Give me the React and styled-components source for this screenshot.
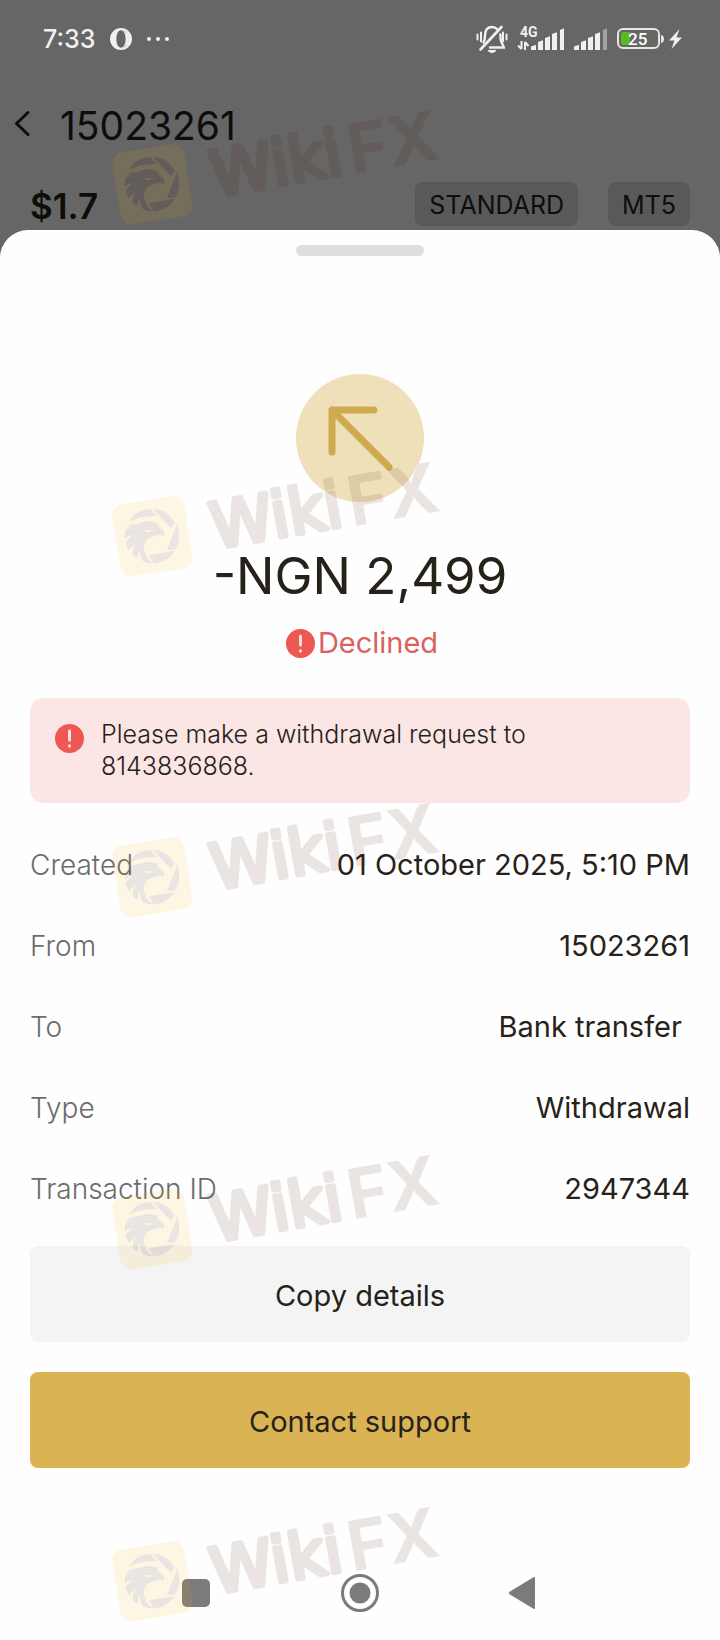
import React from "react";
import styled, { createGlobalStyle } from "styled-components";

const GlobalStyle = createGlobalStyle`
  * {
    box-sizing: border-box;
  }
  body {
    margin: 0;
    background-color: #666666;
    font-family: Inter, "Liberation Sans", sans-serif;
    color: #272219;
  }
  button {
    border: none;
    padding: 0;
    background: none;
    color: inherit;
    font-family: inherit;
    cursor: pointer;
  }
`;

const Page = styled.div`
  position: relative;
  display: flex;
  flex-direction: column;
  min-height: 100vh;
  overflow: hidden;
`;
const StatusBar = styled.div`
  display: flex;
  align-items: center;
  justify-content: space-between;
  height: 78px;
  padding: 0 38px 0 43px;
  color: #f0f0f0;
`;
const StatusGroup = styled.div`
  display: flex;
  align-items: center;
  gap: ${props => props.$gap}px;
`;
const Clock = styled.span`
  font-size: 25px;
  font-weight: 500;
`;
const Header = styled.header`
  display: flex;
  align-items: center;
  gap: 28px;
  height: 92px;
  padding-left: 12px;
  color: #0f0d0a;
`;
const BackButton = styled.button`
  display: flex;
`;
const AccountNumber = styled.h1`
  margin: 0;
  padding-top: 2px;
  font-size: 39px;
  font-weight: 400;
`;
const AccountRow = styled.div`
  display: flex;
  align-items: center;
  justify-content: space-between;
  height: 68px;
  padding: 0 30px;
  color: #0f0d0a;
`;
const Balance = styled.span`
  padding-top: 4px;
  font-size: 35px;
  font-weight: 600;
`;
const Badges = styled.div`
  display: flex;
  gap: 30px;
`;
const Badge = styled.span`
  padding: 2px 14px 0;
  border-radius: 8px;
  background-color: #595959;
  font-size: 25px;
  line-height: 42px;
`;
const Sheet = styled.main`
  display: flex;
  flex: 1;
  flex-direction: column;
  margin-top: -8px;
  padding: 15px 30px 0;
  border-radius: 28px 28px 0 0;
  background-color: #fefefe;
`;
const Handle = styled.div`
  align-self: center;
  width: 128px;
  height: 11px;
  border-radius: 6px;
  background-color: #dedede;
`;
const Summary = styled.section`
  display: flex;
  flex-direction: column;
  align-items: center;
  margin-top: 118px;
`;
const Amount = styled.h2`
  margin: 42px 0 0;
  font-size: 51px;
  font-weight: 400;
  line-height: 64px;
`;
const Status = styled.div`
  display: flex;
  align-items: center;
  gap: 3px;
  margin-top: 14px;
  padding: 2px 0 0 4px;
  color: #d8635f;
  font-size: 29px;
  line-height: 38px;
`;
const Alert = styled.div`
  display: flex;
  gap: 17px;
  margin-top: 36px;
  padding: 20px 25px 21px;
  border-radius: 14px;
  background-color: #fbe6e5;
  font-size: 25px;
  font-weight: 300;
  line-height: 32px;
  svg {
    flex: none;
    margin-top: 6px;
  }
`;
const AlertText = styled.p`
  margin: 0;
  max-width: 440px;
`;
const Details = styled.dl`
  margin: 21px 0 17px;
`;
const DetailRow = styled.div`
  display: flex;
  align-items: center;
  justify-content: space-between;
  height: 81px;
`;
const DetailLabel = styled.dt`
  color: #6c6c6c;
  font-size: 28px;
  font-weight: 300;
`;
const DetailValue = styled.dd`
  margin: 0;
  font-size: 29px;
  white-space: pre;
`;
const Actions = styled.div`
  display: flex;
  flex-direction: column;
  gap: 30px;
`;
const ActionButton = styled.button`
  height: 96px;
  padding-top: 3px;
  border-radius: 8px;
  background-color: ${props => (props.$primary ? "#d9b354" : "#f4f4f4")};
  font-size: 29px;
`;
const NavBar = styled.nav`
  display: flex;
  align-items: center;
  justify-content: center;
  gap: 126px;
  height: 94px;
  margin-top: auto;
`;
const NavButton = styled.button`
  display: flex;
  justify-content: center;
  width: 38px;
`;
const Mark = styled.svg`
  position: absolute;
  left: 100px;
  top: ${props => props.$top}px;
  opacity: 0.1;
  pointer-events: none;
`;

const OperaIcon = () => (
  <svg width="22" height="22" viewBox="0 0 22 22">
    <path
      fill="#f0f0f0"
      fillRule="evenodd"
      d="M11 0a11 11 0 1 0 0 22a11 11 0 1 0 0-22zM11 2.200c3 0 4.600 4 4.600 8.800s-1.600 8.800-4.600 8.800s-4.600-4-4.600-8.800s1.600-8.800 4.600-8.800z"
    />
    <path fill="#d8d8d8" d="M11.500 2c2.500-.6 4.500.6 6 2.800L15 6.500c-.7-2.500-2-4-3.500-4.500zM11.500 20c2.500.6 4.500-.6 6-2.800L15 15.500c-.7 2.500-2 4-3.500 4.500z" />
  </svg>
);

const DotsIcon = () => (
  <svg width="22" height="6" viewBox="0 0 22 6" fill="#f0f0f0">
    <circle cx="2" cy="3" r="2" />
    <circle cx="11" cy="3" r="2" />
    <circle cx="20" cy="3" r="2" />
  </svg>
);

const MutedIcon = () => (
  <svg width="32" height="28" viewBox="0 0 32 28" fill="none" stroke="#f0f0f0" strokeLinecap="round">
    <path strokeWidth="2" d="M1.500 9.500v5M5 7.500v9M27 7.500v9M30.500 9.500v5" />
    <path strokeWidth="2.400" d="M7.500 17.500c1.200-1.700 1.500-3.500 1.500-7C9 5 11.500 2 16 2c2.300 0 4 .8 5.200 2.200M24.300 9.500c0 4.500.5 6.500 1.500 8.500c.7 1.300 1.400 2 2 4.500H14" />
    <path strokeWidth="2.600" d="M4.500 24.500L25.500 2" />
    <path fill="#f0f0f0" stroke="none" d="M11.500 25h9c-1 2-2.500 3-4.500 3s-3.500-1-4.500-3z" />
  </svg>
);

const SignalBars = ({ x, weak }) => (
  <g fill="#f0f0f0">
    <path d={`M${x} 23v-3.500l5-1.800V23z`} />
    <path d={`M${x + 7} 23v-8l5-1.800V23z`} />
    <path d={`M${x + 14} 23V11l5-1.800V23z`} />
    <path d={`M${x + 21} 23V7l5-1.800V23z`} />
    <path fill={weak ? "#a2a2a2" : "#f0f0f0"} d={`M${x + 29} 23V3l4-1.800V23z`} />
  </g>
);

const NetworkIcon = () => (
  <svg width="48" height="32" viewBox="0 -4 48 32">
    <text x="3" y="10" fill="#f0f0f0" fontFamily="Roboto" fontSize="14" fontWeight="700">
      4G
    </text>
    <path
      fill="none"
      stroke="#f0f0f0"
      strokeWidth="2"
      d="M4.500 14v8M1 18.500l3.500 3.500M8 23v-8M8 15l3.500 4"
    />
    <SignalBars x={14} />
  </svg>
);

const SignalIcon = () => (
  <svg width="34" height="24" viewBox="0 0 34 24">
    <SignalBars x={0} weak />
  </svg>
);

const BatteryIcon = () => (
  <svg width="47" height="22" viewBox="0 0 47 22">
    <rect x="1" y="1" width="41" height="19" rx="5" fill="none" stroke="#e6e6e6" strokeWidth="2" />
    <path fill="#59b91e" d="M6 4h7v13H6a2 2 0 0 1-2-2V6a2 2 0 0 1 2-2z" />
    <path fill="#e6e6e6" d="M44 7c2 .5 3 1.500 3 4s-1 3.500-3 4z" />
    <text x="11" y="17" fill="#ffffff" fontFamily="Roboto" fontSize="17" fontWeight="500">
      25
    </text>
  </svg>
);

const BoltIcon = () => (
  <svg width="13" height="20" viewBox="0 0 13 20">
    <path fill="#f0f0f0" d="M10.500 0L0 11.500h5.500L2.500 20L13 8.500H7.500z" />
  </svg>
);

const BackIcon = () => (
  <svg width="20" height="28" viewBox="0 0 20 28" fill="none" stroke="#0f0d0a">
    <path strokeWidth="3" strokeLinecap="round" strokeLinejoin="round" d="M16 2.500L4.500 13.500L16 24.500" />
  </svg>
);

const ArrowIcon = () => (
  <svg width="128" height="128" viewBox="0 0 128 128">
    <circle cx="64" cy="64" r="64" fill="#f0e0ba" />
    <path
      fill="none"
      stroke="#cfab50"
      strokeWidth="7"
      strokeLinecap="round"
      strokeLinejoin="round"
      d="M78 36H36v42M36 36l57 57"
    />
  </svg>
);

const ErrorIcon = () => (
  <svg width="29" height="29" viewBox="0 0 29 29">
    <circle cx="14.500" cy="14.500" r="14.500" fill="#ef5753" />
    <path stroke="#fbe6e5" strokeWidth="3" strokeLinecap="round" d="M14.500 7v9M14.500 21.800v.2" />
  </svg>
);

const Watermark = ({ top }) => (
  <Mark $top={top} width="360" height="190" viewBox="0 -30 360 190" aria-hidden="true">
    <g transform="translate(0 30) scale(.33333)">
      <rect
        x="48"
        y="60"
        width="218"
        height="218"
        rx="32"
        fill="#f0b405"
        transform="rotate(-9 157 169)"
      />
      <g fill="#411400">
        <path d="M88 126C100 102 124 87 151 87L172 109C143 106 115 112 88 126z" />
        <path d="M158 86C187 87 211 104 224 128L213 144z" />
        <path d="M231 132C242 158 239 186 227 207L201 211z" />
        <path d="M148 226L224 212C210 235 187 248 160 250z" />
        <path d="M79 140C104 130 123 130 136 124C157 120 174 129 179 143C190 148 195 158 193 169C184 162 174 166 165 167C148 169 135 181 132 198C130 217 140 236 157 249C142 249 134 247 128 243C123 233 119 224 120 211C113 219 113 229 115 238C108 234 102 229 98 223C97 212 100 202 107 191C96 198 90 205 87 211C82 204 79 197 77 188C82 178 90 171 99 164C89 166 81 170 75 175C74 162 75 151 82 147C88 144 92 144 97 143z" />
      </g>
      <path fill="#f0b405" d="M131 149C140 153 147 150 157 150C153 158 138 160 131 149z" />
    </g>
    <g fill="#411400" stroke="#411400" transform="rotate(-10 130 99)">
      <text
        x="115"
        y="96"
        fontFamily="DejaVu Sans"
        fontSize="63"
        strokeWidth="5"
        strokeLinejoin="round"
      >
        Wiki
      </text>
      <text x="254" y="98" fontFamily="Inter" fontSize="69" fontWeight="700" stroke="none">
        FX
      </text>
    </g>
  </Mark>
);

const details = [
  { label: "Created", value: "01 October 2025, 5:10 PM" },
  { label: "From", value: "15023261" },
  { label: "To", value: "Bank transfer " },
  { label: "Type", value: "Withdrawal" },
  { label: "Transaction ID", value: "2947344" }
];

const watermarks = [68, 420, 761, 1113, 1465];

const App = () => (
  <Page>
    <GlobalStyle />
    <StatusBar>
      <StatusGroup $gap={15}>
        <Clock>7:33</Clock>
        <OperaIcon />
        <DotsIcon />
      </StatusGroup>
      <StatusGroup $gap={9}>
        <MutedIcon />
        <NetworkIcon />
        <SignalIcon />
        <StatusGroup $gap={5}>
          <BatteryIcon />
          <BoltIcon />
        </StatusGroup>
      </StatusGroup>
    </StatusBar>
    <Header>
      <BackButton type="button" aria-label="Back">
        <BackIcon />
      </BackButton>
      <AccountNumber>15023261</AccountNumber>
    </Header>
    <AccountRow>
      <Balance>$1.7</Balance>
      <Badges>
        <Badge>STANDARD</Badge>
        <Badge>MT5</Badge>
      </Badges>
    </AccountRow>
    <Sheet>
      <Handle />
      <Summary>
        <ArrowIcon />
        <Amount>-NGN 2,499</Amount>
        <Status>
          <ErrorIcon />
          Declined
        </Status>
      </Summary>
      <Alert>
        <ErrorIcon />
        <AlertText>Please make a withdrawal request to 8143836868.</AlertText>
      </Alert>
      <Details>
        {details.map(({ label, value }) => (
          <DetailRow key={label}>
            <DetailLabel>{label}</DetailLabel>
            <DetailValue>{value}</DetailValue>
          </DetailRow>
        ))}
      </Details>
      <Actions>
        <ActionButton type="button">Copy details</ActionButton>
        <ActionButton type="button" $primary>
          Contact support
        </ActionButton>
      </Actions>
      <NavBar>
        <NavButton type="button" aria-label="Recent apps">
          <svg width="28" height="28" viewBox="0 0 28 28">
            <rect width="28" height="28" rx="5" fill="#7b7b7b" />
          </svg>
        </NavButton>
        <NavButton type="button" aria-label="Home">
          <svg width="38" height="38" viewBox="0 0 38 38">
            <circle cx="19" cy="19" r="17.500" fill="none" stroke="#7b7b7b" strokeWidth="3" />
            <circle cx="19" cy="19" r="10.500" fill="#7b7b7b" />
          </svg>
        </NavButton>
        <NavButton type="button" aria-label="Back to previous screen">
          <svg width="32" height="34" viewBox="0 0 32 34">
            <path fill="#7b7b7b" d="M25.500 1.300Q27 .5 27 2v30q0 1.500-1.500.7L1.500 18.200q-1.500-1.200 0-2.400z" />
          </svg>
        </NavButton>
      </NavBar>
    </Sheet>
    {watermarks.map(top => (
      <Watermark key={top} top={top} />
    ))}
  </Page>
);

export default App;
